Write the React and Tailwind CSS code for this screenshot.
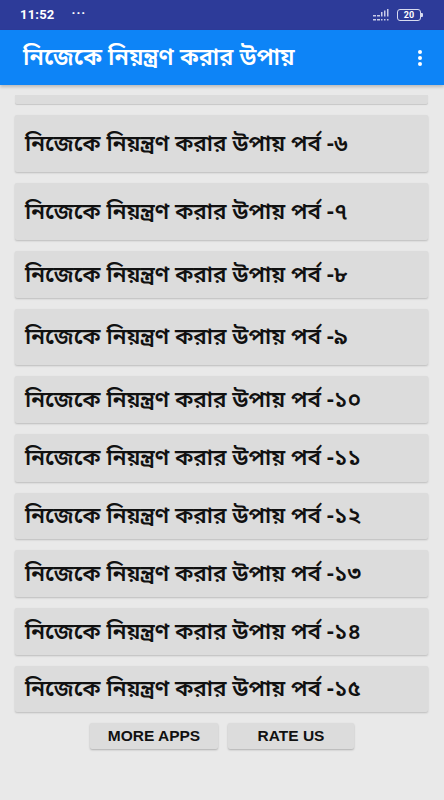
import React from "react";

const items = [
  { n: "৬", h: "h-[57px]" },
  { n: "৭", h: "h-[57px]" },
  { n: "৮", h: "h-[47px]" },
  { n: "৯", h: "h-[56px]" },
  { n: "১০", h: "h-[47px]" },
  { n: "১১", h: "h-[48px]" },
  { n: "১২", h: "h-[46px]" },
  { n: "১৩", h: "h-[47px]" },
  { n: "১৪", h: "h-[47px]" },
  { n: "১৫", h: "h-[46px]" },
];

const bn = { fontFamily: '"Noto Sans Bengali", "Noto Sans", "Lohit Bengali", sans-serif' };

export default function App() {
  return (
    <div className="w-[444px] h-[800px] bg-[#e9e9e9] overflow-hidden flex flex-col">
      {/* status bar */}
      <div className="h-[30px] bg-[#2d3b99] flex items-center px-[20px] text-white" style={{ fontFamily: 'Roboto, "Liberation Sans", sans-serif' }}>
        <span className="text-[13px] font-bold tracking-[0.2px]">11:52</span>
        <span className="ml-[17px] text-[13px] font-bold tracking-[1px] -mt-[4px]">···</span>
        <div className="ml-auto flex items-center gap-[7px] mr-[1px]">
          <svg width="18" height="12" viewBox="0 0 18 12" fill="#c9cce8">
            <rect x="1" y="6" width="3" height="1.5" />
            <rect x="5" y="6" width="3" height="1.5" />
            <rect x="9" y="3" width="1.5" height="4.5" />
            <rect x="12" y="1.5" width="1.5" height="6" />
            <rect x="15" y="0" width="1.5" height="7.5" />
            <rect x="1" y="10" width="3" height="1.5" />
            <rect x="5" y="10" width="3" height="1.5" />
            <rect x="9" y="10" width="1.5" height="1.5" />
            <rect x="12" y="10" width="1.5" height="1.5" />
            <rect x="15" y="10" width="1.5" height="1.5" />
          </svg>
          <div className="flex items-center">
            <div className="w-[24px] h-[12px] border border-[#d8dbef] rounded-[3px] flex items-center justify-center text-[9px] font-bold leading-none">20</div>
            <div className="w-[2px] h-[4px] bg-[#d8dbef] rounded-r-[1px]" />
          </div>
        </div>
      </div>
      {/* app bar */}
      <div className="h-[55px] bg-[#0d84f7] flex items-center pl-[23px] pr-[22px] text-white shadow-[0_2px_3px_rgba(0,0,0,0.2)] relative z-10">
        <span className="text-[23.5px] font-semibold leading-none pt-[5px]" style={bn}>নিজেকে নিয়ন্ত্রণ করার উপায়</span>
        <div className="ml-auto flex flex-col gap-[2px]">
          <div className="w-[4px] h-[4px] rounded-full bg-white" />
          <div className="w-[4px] h-[4px] rounded-full bg-white" />
          <div className="w-[4px] h-[4px] rounded-full bg-white" />
        </div>
      </div>
      {/* list */}
      <div className="flex flex-col gap-[11px] px-[15px] pt-[10px] pr-[16px]">
        <div className="h-[9px] bg-[#dcdcdc] rounded-b-[2px] shadow-[0_1px_1px_rgba(0,0,0,0.15)]" />
        {items.map((it) => (
          <div key={it.n} className={`${it.h} bg-[#dcdcdc] rounded-[2px] shadow-[0_1px_2px_rgba(0,0,0,0.2)] flex items-center pl-[10px]`}>
            <span className="text-[22.5px] leading-none font-semibold text-[#111] pt-[3px]" style={bn}>নিজেকে নিয়ন্ত্রণ করার উপায় পর্ব -{it.n}</span>
          </div>
        ))}
      </div>
      {/* buttons */}
      <div className="flex justify-center gap-[10px] mt-[11px]" style={{ fontFamily: '"Liberation Sans", Arial, sans-serif' }}>
        <button className="w-[128px] h-[26px] bg-[#dcdcdc] rounded-[2px] shadow-[0_1px_2px_rgba(0,0,0,0.25)] text-[15.5px] font-bold text-[#111]">MORE APPS</button>
        <button className="w-[126px] h-[26px] bg-[#dcdcdc] rounded-[2px] shadow-[0_1px_2px_rgba(0,0,0,0.25)] text-[15.5px] font-bold text-[#111]">RATE US</button>
      </div>
    </div>
  );
}
